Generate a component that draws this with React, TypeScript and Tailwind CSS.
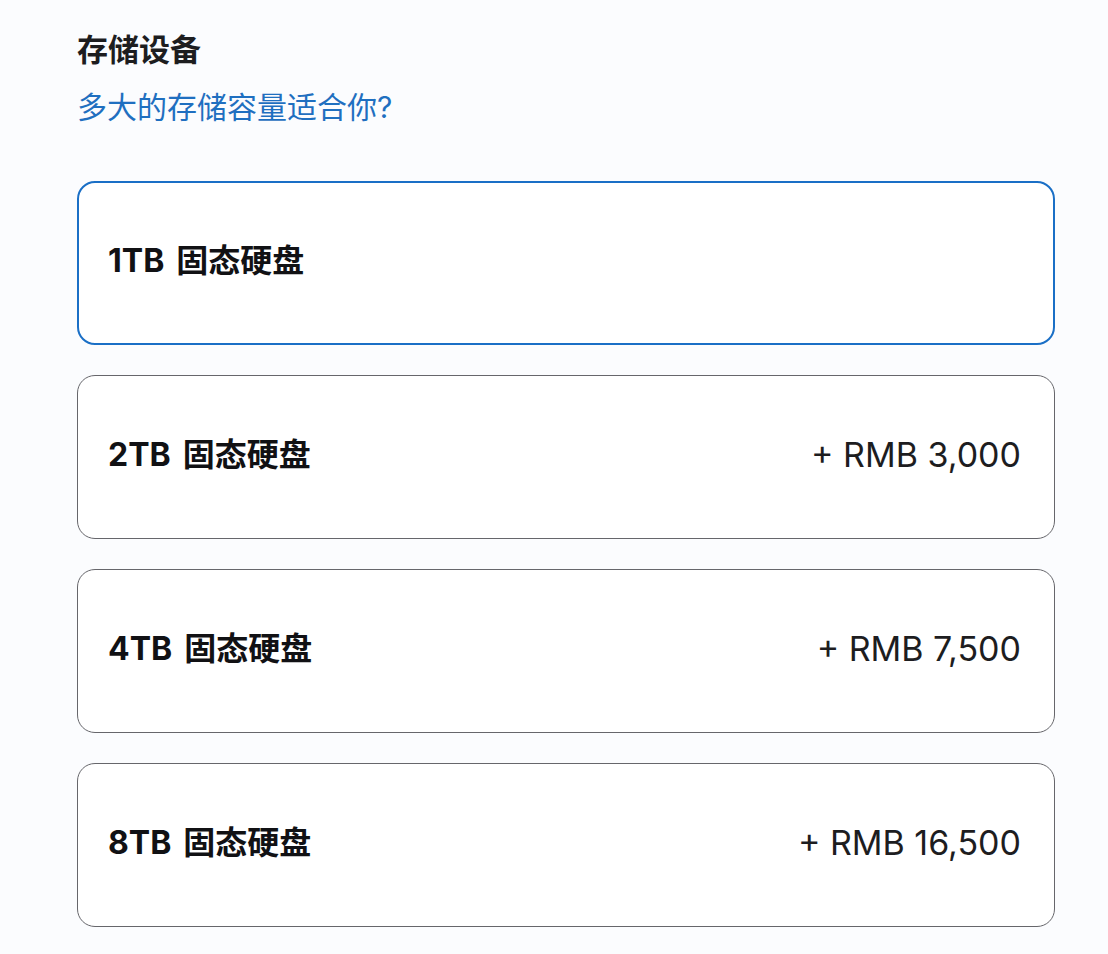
import React from "react";

const options = [
  { size: "1TB", price: "", selected: true },
  { size: "2TB", price: "+ RMB 3,000", selected: false },
  { size: "4TB", price: "+ RMB 7,500", selected: false },
  { size: "8TB", price: "+ RMB 16,500", selected: false },
];

export default function App() {
  return (
    <div
      className="w-[1108px] h-[954px] bg-[#fbfcfe] pl-[77px] pr-[53px] pt-[31px] overflow-hidden"
      style={{ fontFamily: '"Inter", "Noto Sans CJK SC", sans-serif' }}
    >
      <h2 className="text-[31px] leading-[38px] font-bold text-[#1d1d1f]">存储设备</h2>
      <p className="mt-[19px] text-[30px] leading-[38px] text-[#1f6fc0]">多大的存储容量适合你?</p>
      <div className="mt-[55px] flex flex-col gap-[30px]">
        {options.map((o) => (
          <div
            key={o.size}
            className={
              o.selected
                ? "h-[164px] rounded-[18px] border-2 border-[#1a6fc6] bg-white flex items-center justify-between pl-[29px] pr-[33px] pb-[5px]"
                : "h-[164px] rounded-[18px] border border-[#66666b] bg-white flex items-center justify-between pl-[30px] pr-[33px] pb-[5px]"
            }
          >
            <span className="text-[32px] font-bold text-[#111114] flex items-center gap-[12px]">
              <span>{o.size}</span>
              <span>固态硬盘</span>
            </span>
            {o.price && <span className="text-[34px] text-[#1d1d1f]">{o.price}</span>}
          </div>
        ))}
      </div>
    </div>
  );
}
